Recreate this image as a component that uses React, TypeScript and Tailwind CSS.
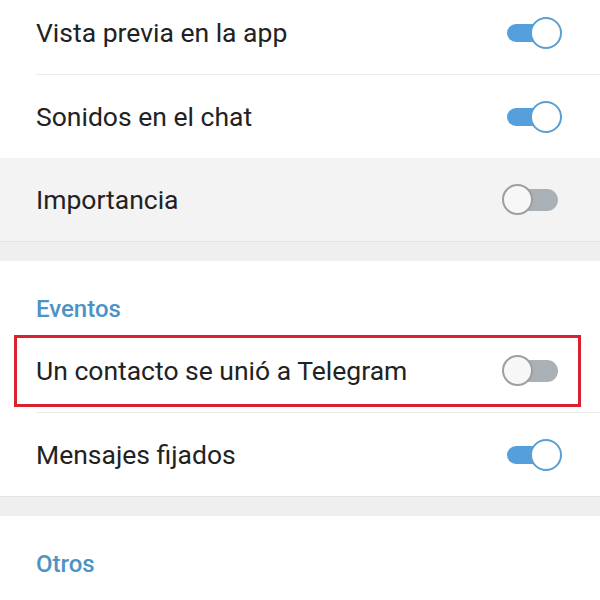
type RowProps = {
    label: string;
    on: boolean;
    gray?: boolean;
    divider?: boolean;
    highlight?: boolean;
};

function Toggle({ on }: { on: boolean }) {
    if (on) {
        return (
            <div className="relative w-[60px] h-[32px] shrink-0">
                <div className="absolute left-[5px] top-[7px] w-[42px] h-[18px] rounded-full bg-[#55a0dc]" />
                <div className="absolute right-0 top-0 w-[32px] h-[32px] rounded-full bg-white border-[2.5px] border-[#5b9fd2]" />
            </div>
        );
    }
    return (
        <div className="relative w-[60px] h-[32px] shrink-0">
            <div className="absolute right-[4px] top-[5px] w-[42px] h-[22px] rounded-full bg-[#a9b0b6]" />
            <div className="absolute left-0 top-0 w-[31px] h-[31px] rounded-full bg-[#f7f7f7] border-[2.5px] border-[#9e9e9e]" />
        </div>
    );
}

function Row({ label, on, gray, divider, highlight }: RowProps) {
    return (
        <div className={`relative pl-[36px] ${gray ? 'bg-[#f3f3f3]' : 'bg-white'}`}>
            <div className={`h-[83px] flex items-center justify-between pr-[38px] ${divider ? 'border-b border-[#ebebeb]' : ''}`}>
                <span className="text-[26.5px] text-[#222]">{label}</span>
                <Toggle on={on} />
            </div>
            {highlight && (
                <div className="absolute left-[14px] top-[5px] w-[567px] h-[72px] border-[3px] border-[#d9222e]" />
            )}
        </div>
    );
}

function Band() {
    return <div className="h-[20px] bg-[#efefef] border-t border-[#e4e4e4]" />;
}

function Header({ label, height }: { label: string; height: string }) {
    return (
        <div className={`${height} pl-[36px] pt-[30px] bg-white`}>
            <span className="text-[24px] font-medium text-[#4d93c4]">{label}</span>
        </div>
    );
}

export default function App() {
    return (
        <div className="w-[600px] h-[600px] overflow-hidden bg-white" style={{ fontFamily: 'Roboto, "Noto Sans", sans-serif' }}>
            <div className="-mt-[8px]">
                <Row label="Vista previa en la app" on divider />
                <Row label="Sonidos en el chat" on />
                <Row label="Importancia" on={false} gray />
                <Band />
                <Header label="Eventos" height="h-[69px]" />
                <Row label="Un contacto se unió a Telegram" on={false} divider highlight />
                <Row label="Mensajes fijados" on />
                <Band />
                <Header label="Otros" height="h-[100px]" />
            </div>
        </div>
    );
}
